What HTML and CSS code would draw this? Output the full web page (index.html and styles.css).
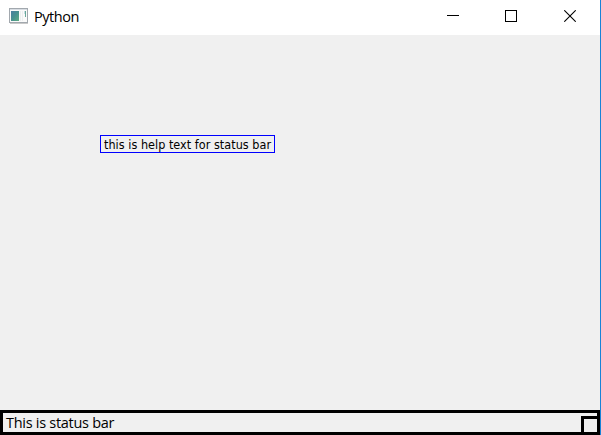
FILE: index.html
```html
<!DOCTYPE html>
<html lang="en">
<head>
<meta charset="utf-8">
<title>Python</title>
<link rel="stylesheet" href="styles.css">
</head>
<body>
<div class="window">
  <header class="titlebar">
    <svg class="app-icon" width="20" height="16" viewBox="0 0 20 16" shape-rendering="crispEdges">
      <defs><linearGradient id="pane" x1="0" y1="0" x2="1" y2="1"><stop offset="0" stop-color="#4a7da0"/><stop offset=".5" stop-color="#47918f"/><stop offset="1" stop-color="#5fac82"/></linearGradient></defs>
      <rect x=".5" y=".5" width="18" height="14" fill="#fafafa" stroke="#a2a8ae"/>
      <path d="M1 1.5h17" stroke="#d8dde3"/>
      <path d="M1 15.5h18" stroke="#c9c9c9"/>
      <rect x="2" y="3" width="8" height="10" fill="url(#pane)"/>
      <path d="M11.5 3v10M13.500 3v10" stroke="#eceff0"/>
      <rect x="16" y="3" width="1" height="6" fill="#68a89a"/>
      <rect x="15" y="3" width="1" height="3" fill="#c8dce2"/>
    </svg>
    <h1 class="title">Python</h1>
    <nav class="controls">
      <button class="control" aria-label="Minimize"><svg width="12" height="12" shape-rendering="crispEdges"><path d="M0 5.500h12"/></svg></button>
      <button class="control" aria-label="Maximize"><svg width="12" height="12" shape-rendering="crispEdges"><path d="M.5 .5h11v11h-11z"/></svg></button>
      <button class="control" aria-label="Close"><svg width="12" height="12"><path d="M.3 .3l11.400 11.400M11.700 .3L.3 11.700"/></svg></button>
    </nav>
  </header>
  <main class="content">
    <div class="help"><span class="help-text">this is help text for status bar</span></div>
  </main>
  <footer class="statusbar">
    <span class="status-text">This is status bar</span>
    <span class="grip"></span>
  </footer>
</div>
</body>
</html>
```
FILE: styles.css
```css
* { box-sizing: border-box; }
body { margin: 0; overflow: hidden; }
.window {
  width: 601px;
  height: 435px;
  display: flex;
  flex-direction: column;
  border-right: 1px solid #1883d7;
  background: #f0f0f0;
  color: #000;
}
.titlebar {
  height: 35px;
  display: flex;
  align-items: flex-start;
  padding-left: 9px;
  background: #fff;
}
.app-icon { margin-top: 8px; flex: none; }
.title {
  margin: 7px 0 0 5px;
  font: 400 14.500px/20px "Open Sans", "Noto Sans", sans-serif;
  letter-spacing: -0.45px;
}
.controls { margin-left: auto; display: flex; gap: 46px; padding: 10px 24px 0 0; }
.controls .control:last-child { margin-left: 1px; }
.control { width: 12px; height: 12px; padding: 0; border: 0; background: none; }
.control svg { display: block; fill: none; stroke: #000; stroke-width: 1.1; }
.content { flex: 1; padding: 100px 0 0 100px; }
.help {
  width: 175px;
  height: 18px;
  padding-left: 3px;
  border: 1px solid #00f;
  font: 12.500px/18px "DejaVu Sans Condensed", "DejaVu Sans", sans-serif;
  font-stretch: condensed;
  letter-spacing: 0.03px;
  white-space: nowrap;
}
.statusbar {
  height: 25px;
  display: flex;
  justify-content: space-between;
  align-items: flex-end;
  border: 3px solid #000;
  padding-left: 3px;
}
.status-text {
  margin-bottom: -1px;
  font: 14.500px/20px "Open Sans", "Noto Sans", sans-serif;
  letter-spacing: -0.28px;
  white-space: nowrap;
}
.grip { width: 16px; height: 16px; border: 3px solid #000; border-width: 3px 0 0 3px; }
```
